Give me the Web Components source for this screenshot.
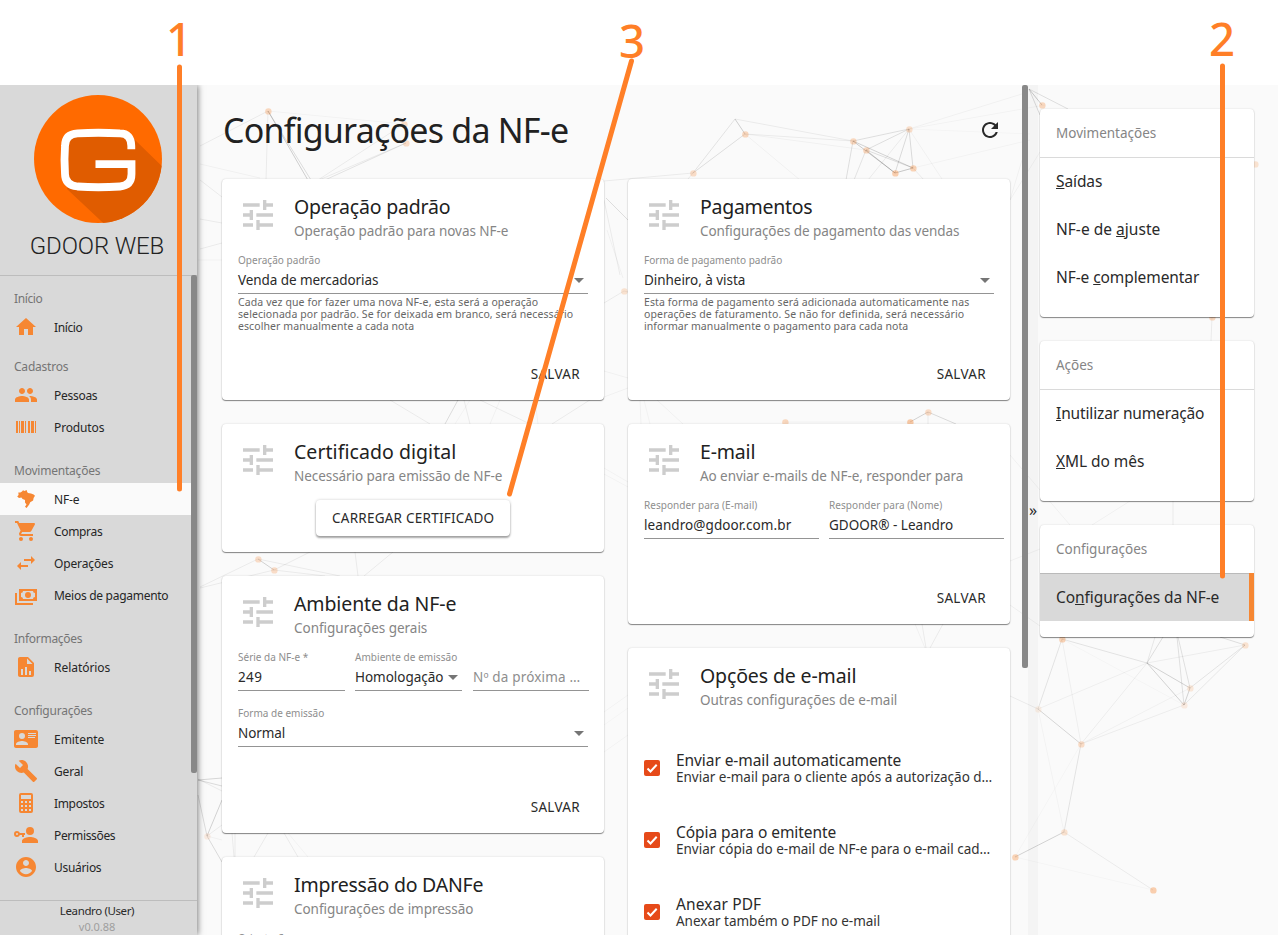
<!DOCTYPE html>
<html lang="pt-BR">
<head>
<meta charset="utf-8">
<title>GDOOR WEB</title>
<style>
html,body{margin:0;height:935px;overflow:hidden;background:#fff}
body{font-family:"Noto Sans","Open Sans",sans-serif;color:#2a2a2a}
</style>
</head>
<body>
<gdoor-page></gdoor-page>
<script>
const ICONS={
home:'M10,20V14H14V20H19V12H22L12,3L2,12H5V20H10Z',
people:'M16 11c1.66 0 2.99-1.34 2.99-3S17.66 5 16 5c-1.66 0-3 1.34-3 3s1.34 3 3 3zm-8 0c1.66 0 2.99-1.34 2.99-3S9.66 5 8 5C6.34 5 5 6.34 5 8s1.34 3 3 3zm0 2c-2.33 0-7 1.17-7 3.5V19h14v-2.5c0-2.33-4.67-3.5-7-3.5zm8 0c-.29 0-.62.02-.97.05 1.16.84 1.97 1.97 1.97 3.45V19h6v-2.5c0-2.33-4.67-3.5-7-3.5z',
barcode:'M2,6H4V18H2V6M5,6H6V18H5V6M7,6H10V18H7V6M11,6H12V18H11V6M14,6H16V18H14V6M17,6H20V18H17V6M21,6H22V18H21V6Z',
brazil:'M8 4.6L9 3.2L10.5 4L12.6 3.1L13.2 5L14 6L17 6.6L19.6 7.6L21 8.8L19.6 11L19.1 13.6L16.2 15.2L15.2 17.6L12.6 20.9L11 19.8L12.5 17.4L11 15.6L11 13L8.6 12L7.4 10.6L5 11L3.2 9.4L4.6 8L4.3 5.4L6.4 5.6Z',
cart:'M17,18C15.89,18 15,18.89 15,20A2,2 0 0,0 17,22A2,2 0 0,0 19,20C19,18.89 18.1,18 17,18M1,2V4H3L6.6,11.59L5.24,14.04C5.09,14.32 5,14.65 5,15A2,2 0 0,0 7,17H19V15H7.42A0.25,0.25 0 0,1 7.17,14.75C7.17,14.7 7.18,14.66 7.2,14.63L8.1,13H15.55C16.3,13 16.96,12.58 17.3,11.97L20.88,5.5C20.95,5.34 21,5.17 21,5A1,1 0 0,0 20,4H5.21L4.27,2M7,18C5.89,18 5,18.89 5,20A2,2 0 0,0 7,22A2,2 0 0,0 9,20C9,18.89 8.1,18 7,18Z',
swap:'M21,9L17,5V8H10V10H17V13M7,11L3,15L7,19V16H14V14H7V11Z',
cash:'M5,6H23V18H5V6M14,9A3,3 0 0,1 17,12A3,3 0 0,1 14,15A3,3 0 0,1 11,12A3,3 0 0,1 14,9M9,8A2,2 0 0,1 7,10V14A2,2 0 0,1 9,16H19A2,2 0 0,1 21,14V10A2,2 0 0,1 19,8H9M1,10H3V20H19V22H1V10Z',
report:'M13,9H18.5L13,3.5V9M6,2H14L20,8V20A2,2 0 0,1 18,22H6C4.89,22 4,21.1 4,20V4C4,2.89 4.89,2 6,2M7,20H9V14H7V20M11,20H13V12H11V20M15,20H17V16H15V20Z',
idcard:'M2,3H22C23.05,3 24,3.95 24,5V19C24,20.05 23.05,21 22,21H2C0.95,21 0,20.05 0,19V5C0,3.95 0.95,3 2,3M14,6V7H22V6H14M14,8V9H21.5L22,9V8H14M14,10V11H21V10H14M8,13.91C6,13.91 2,15 2,17V18H14V17C14,15 10,13.91 8,13.91M8,6A3,3 0 0,0 5,9A3,3 0 0,0 8,12A3,3 0 0,0 11,9A3,3 0 0,0 8,6Z',
wrench:'M22.7 19l-9.1-9.1c.9-2.3.4-5-1.5-6.9-2-2-5-2.4-7.4-1.3L9 6 6 9 1.6 4.7C.4 7.1.9 10.1 2.9 12.1c1.9 1.9 4.6 2.4 6.9 1.5l9.1 9.1c.4.4 1 .4 1.4 0l2.3-2.3c.5-.4.5-1.1.1-1.4z',
calc:'M7,2H17A2,2 0 0,1 19,4V20A2,2 0 0,1 17,22H7A2,2 0 0,1 5,20V4A2,2 0 0,1 7,2M7,4V8H17V4H7M7,10V12H9V10H7M11,10V12H13V10H11M15,10V12H17V10H15M7,14V16H9V14H7M11,14V16H13V14H11M15,14V16H17V14H15M7,18V20H9V18H7M11,18V20H13V18H11M15,18V20H17V18H15Z',
key:'M11,10V12H10V14H8V12H5.83C5.42,13.17 4.31,14 3,14A3,3 0 0,1 0,11A3,3 0 0,1 3,8C4.31,8 5.42,8.83 5.83,10H11M3,10A1,1 0 0,0 2,11A1,1 0 0,0 3,12A1,1 0 0,0 4,11A1,1 0 0,0 3,10M16,14C18.67,14 24,15.34 24,18V20H8V18C8,15.34 13.33,14 16,14M16,12A4,4 0 0,1 12,8A4,4 0 0,1 16,4A4,4 0 0,1 20,8A4,4 0 0,1 16,12Z',
user:'M12 2C6.48 2 2 6.48 2 12s4.48 10 10 10 10-4.48 10-10S17.52 2 12 2zm0 3c1.66 0 3 1.34 3 3s-1.34 3-3 3-3-1.34-3-3 1.34-3 3-3zm0 14.2c-2.5 0-4.71-1.28-6-3.22.03-1.99 4-3.08 6-3.08 1.99 0 5.97 1.09 6 3.08-1.29 1.94-3.5 3.22-6 3.22z',
tune:'M3 17v2h6v-2H3zM3 5v2h10V5H3zm10 16v-2h8v-2h-8v-2h-2v6h2zM7 9v2H3v2h4v2h2V9H7zm14 4v-2H11v2h10zm-6-4h2V7h4V5h-4V3h-2v6z',
refresh:'M17.65 6.35C16.2 4.9 14.21 4 12 4c-4.42 0-7.99 3.58-7.99 8s3.57 8 7.99 8c3.73 0 6.84-2.55 7.73-6h-2.08c-.82 2.33-3.04 4-5.65 4-3.31 0-6-2.69-6-6s2.69-6 6-6c1.66 0 3.14.69 4.22 1.78L13 11h7V4l-2.35 2.35z'
};

class Base extends HTMLElement{
  constructor(){super();this.attachShadow({mode:'open'})}
  a(n){return this.getAttribute(n)||''}
  connectedCallback(){this.shadowRoot.innerHTML=`<style>${this.css()}</style>${this.html()}`}
  css(){return ':host{display:block}'}
  html(){return '<slot></slot>'}
}

class UiIcon extends Base{
  css(){return ':host{display:block;flex:none;width:var(--s,24px);height:var(--s,24px)}svg{display:block;width:100%;height:100%;fill:currentColor}'}
  html(){return `<svg viewBox="0 0 24 24"><path fill-rule="evenodd" d="${ICONS[this.a('name')]}"/></svg>`}
}

class AppLogo extends Base{
  css(){return `:host{display:flex;flex-direction:column;align-items:center;height:191px;box-sizing:border-box;padding:10px 1px 0 0;border-bottom:1px solid #bdbdbd}
    svg{display:block;width:128px;height:128px}
    .n{font:300 24px/28px Roboto,sans-serif;margin-top:9px;color:#222;margin-right:2px}`}
  html(){return `<svg viewBox="0 0 128 128"><defs><clipPath id="c"><circle cx="64" cy="64" r="64"/></clipPath></defs>
    <circle cx="64" cy="64" r="64" fill="#ff6a00"/>
    <g clip-path="url(#c)"><path d="M34 41H93L100 44L140 83V140H82L33 94Z" fill="#e05c00"/></g>
    <path d="M97.3 54.3V51Q97.3 38.3 86 38.3Q64 37.2 43.500 38.300Q31 39 31 51Q30 64 31 79Q31 90 43.500 91.500Q64 93 86 91.500Q97.500 90.500 97.500 79V69.200H61.500" fill="none" stroke="#fff" stroke-width="7.8"/></svg>
    <div class="n"><fit-text w="134">GDOOR WEB</fit-text></div>`}
}

class NavGroup extends Base{
  css(){return `:host{display:block}
    .l{height:25px;line-height:26px;padding:var(--gap,15px) 0 0 14px;font-size:12px;color:#757575}`}
  html(){return `<div class="l"><fit-text w="${this.a('w')}">${this.a('label')}</fit-text></div><slot></slot>`}
}
class NavItem extends Base{
  css(){return `:host{display:flex;align-items:center;height:32px;padding-left:14px;font-size:12px;line-height:30px;color:#262626;margin-right:6px}
    :host([active]){background:#fafafa}
    ui-icon{color:#f68733;margin-right:16px}
    fit-text{margin-top:2px}`}
  html(){return `<ui-icon name="${this.a('icon')}"></ui-icon><fit-text w="${this.a('w')}"><slot></slot></fit-text>`}
}
class AppSidebar extends Base{
  css(){return `:host{display:flex;flex-direction:column;width:197px;background:#d9d9d9;box-shadow:1px 0 6px rgba(0,0,0,.5);z-index:2}
    .list{flex:1;min-height:0;position:relative;margin-top:-1px}
    .bar{position:absolute;right:0;top:0;width:6px;height:498px;background:#888;border-radius:2px}
    footer{height:35px;border-top:1px solid #bdbdbd;font-size:11.500px;line-height:16px;text-align:center;padding-top:2px;box-sizing:border-box;padding-right:3px}
    .v{color:#9e9e9e;font-size:11px;line-height:15px}`}
  html(){return `<app-logo></app-logo><div class="list"><div class="bar"></div>
    <nav-group label="Início" w="28" style="--gap:11px"><nav-item icon="home" w="28">Início</nav-item></nav-group>
    <nav-group label="Cadastros" w="54" style="--gap:11px"><nav-item icon="people" w="43">Pessoas</nav-item><nav-item icon="barcode" w="50">Produtos</nav-item></nav-group>
    <nav-group label="Movimentações" w="86"><nav-item icon="brazil" w="25" active>NF-e</nav-item><nav-item icon="cart" w="48">Compras</nav-item><nav-item icon="swap" w="59">Operações</nav-item><nav-item icon="cash" w="114">Meios de pagamento</nav-item></nav-group>
    <nav-group label="Informações" w="68"><nav-item icon="report" w="56">Relatórios</nav-item></nav-group>
    <nav-group label="Configurações" w="78"><nav-item icon="idcard" w="50">Emitente</nav-item><nav-item icon="wrench" w="29">Geral</nav-item><nav-item icon="calc" w="50">Impostos</nav-item><nav-item icon="key" w="61">Permissões</nav-item><nav-item icon="user" w="47">Usuários</nav-item></nav-group>
    </div><footer><fit-text w="74">Leandro (User)</fit-text><div class="v"><fit-text w="36">v0.0.88</fit-text></div></footer>`}
}

class UiCard extends Base{
  css(){return `:host{display:flex;flex-direction:column;box-sizing:border-box;height:var(--h);padding:16px;background:#fff;border-radius:4px;box-shadow:0 1px 1px rgba(0,0,0,.45),0 0 2px rgba(0,0,0,.16)}
    header{display:flex;height:40px;margin-bottom:18px}
    ui-icon{--s:40px;color:#cdcdcd;margin-right:16px}
    .t{font-size:19.500px;line-height:24px;height:24px;white-space:nowrap;color:#212121}
    .s{font-size:13.500px;line-height:24px;color:#858585;white-space:nowrap}`}
  html(){return `<header><ui-icon name="tune"></ui-icon><div><div class="t"><fit-text w="${this.a('tw')}">${this.a('title-text')}</fit-text></div><div class="s"><fit-text w="${this.a('sw')}">${this.a('sub')}</fit-text></div></div></header><slot></slot>`}
}
class UiField extends Base{
  css(){return `:host{display:block;flex:none;box-sizing:border-box;width:var(--w,350px)}
    .l{height:14px;line-height:14px;font-size:10px;color:#8e8e8e;white-space:nowrap}
    .v{display:flex;align-items:center;justify-content:space-between;height:27px;box-sizing:border-box;border-bottom:1px solid #949494;font-size:13.500px;line-height:24px;white-space:nowrap}
    .v fit-text{margin-top:-1px}
    :host([empty]) .v{color:#8e8e8e}
    i{width:0;height:0;border:5px solid transparent;border-top-color:#757575;border-bottom:0;margin-right:4px}
    .h{font-size:10.500px;line-height:12px;color:#666;padding-top:2px;white-space:nowrap}`}
  html(){return `<div class="l">${this.a('label')?`<fit-text w="${this.a('lw')}">${this.a('label')}</fit-text>`:''}</div>
    <div class="v"><fit-text w="${this.a('vw')}">${this.a('value')}</fit-text>${this.hasAttribute('select')?'<i></i>':''}</div><div class="h"><slot></slot></div>`}
}
class UiAction extends Base{
  css(){return `:host{display:block;margin-top:auto;align-self:flex-end;font-size:13.500px;line-height:20px;padding-right:8px}`}
  html(){return '<fit-text w="49">SALVAR</fit-text>'}
}
class RaisedButton extends Base{
  css(){return `:host{display:block;align-self:center;box-sizing:border-box;width:194px;height:36px;margin-top:2px;padding-left:16px;border-radius:4px;font-size:13.500px;line-height:36px;background:#fff;box-shadow:0 2px 2px rgba(0,0,0,.32),0 0 3px rgba(0,0,0,.2)}`}
  html(){return '<fit-text w="162"><slot></slot></fit-text>'}
}
class CheckRow extends Base{
  css(){return `:host{display:flex;align-items:center;height:72px}
    .b{width:16px;height:16px;border-radius:2px;background:#e64a19;margin-right:16px;flex:none}
    svg{display:block}
    .p{font-size:15.500px;line-height:18px;white-space:nowrap}.q{font-size:13.500px;line-height:16px;white-space:nowrap;color:#333}`}
  html(){return `<div class="b"><svg width="16" height="16"><path d="M3.500 8.500L6.500 11.500L12.700 4.800" fill="none" stroke="#fff" stroke-width="2"/></svg></div>
    <div><div class="p"><fit-text w="${this.a('pw')}">${this.a('primary')}</fit-text></div><div class="q"><fit-text w="${this.a('qw')}">${this.a('secondary')}</fit-text></div></div>`}
}

class SidePanel extends Base{
  css(){return `:host{display:block;background:#fff;border-radius:4px;padding-bottom:16px;box-shadow:0 1px 1px rgba(0,0,0,.45),0 0 2px rgba(0,0,0,.14)}
    .h{height:48px;line-height:48px;padding-left:16px;font-size:13.500px;color:#858585;box-shadow:0 1px #dadada;position:relative}`}
  html(){return `<div class="h"><fit-text w="${this.a('w')}">${this.a('label')}</fit-text></div><slot></slot>`}
}
class SideLink extends Base{
  css(){return `:host{display:block;height:48px;line-height:48px;padding-left:16px;font-size:15.500px}
    :host([active]){background:#d9d9d9;border-right:5px solid #f68733;box-shadow:inset 0 1px #bababa;position:relative}`}
  html(){return `<fit-text w="${this.a('w')}"><slot></slot></fit-text>`}
}

/* decorative constellation behind the content */
class NetBackdrop extends Base{
  css(){return ':host{position:absolute;inset:0;display:block}svg{display:block}'}
  html(){
    const L=[[268,111,309,182,.22],[268,111,311,180,.15],[268,111,266,180],[268,111,200,146],[268,111,404,124,.04],[404,124,318,180],[406,143,325,180,.12],[406,143,319,180],[200,164,260,178,.05],[200,180,222,197],[200,219,222,223],[200,249,222,243],[198,260,222,260,.04],
    [735,119,745,134,.22],[735,119,693,173,.12],[745,134,693,173,.14],[735,119,853,141],[745,134,853,141],[745,134,866,150,.05],[745,134,800,180,.05],[853,141,909,129,.14],[853,141,895,173,.24],[853,141,913,168,.2],[866,150,909,129,.14],[866,150,913,168,.14],[866,150,895,173,.2],[895,173,913,168,.26],[909,129,913,168,.16],[909,129,895,173,.16],[909,129,868,180],[853,141,846,180,.14],[866,150,854,180,.12],[909,129,942,179,.05],[909,129,1025,93,.05],[909,129,1045,105,.04],[909,129,1030,134,.03],[913,168,1030,140,.04],[693,173,604,181],[693,173,688,179],[913,168,924,180],[624,291,604,303],[624,291,628,292],[606,198,628,220,.14],[607,230,623,278,.05],[604,200,620,275],[1022,160,1010,200,.05],
    [1029,89,1042,105,.25],[1029,89,1068,109,.14],[1029,89,1040,115,.16],[1040,152,1010,200,.05],[1212,317,1211,341],[458,400,445,424,.15],[464,400,470,424],[480,400,530,424],[390,400,430,424],[500,400,490,424,.05],[470,400,455,424,.04],[535,400,538,424,.05],[604,391,552,424],[604,371,628,378,.05],[258,559,274,570,.2],[258,559,200,587],[274,570,310,552],[274,570,200,588],[258,559,340,576],[274,570,325,576],[355,552,358,576],[393,552,364,576],[604,468,628,482,.04],[604,474,628,487,.04],
    [910,422,928,412,.2],[928,412,956,424,.16],[928,412,928,424],[785,422,910,422,.04],[640,400,641,424,.05],[644,400,650,424,.04],[657,400,683,424,.05],[628,388,604,397,.05],[1010,455,1070,525,.05],[915,624,925,648,.05],[922,624,926,648],[943,624,930,648],[1130,501,1092,525,.05],[1173,501,1173,525],[1010,561,1040,549,.05],[1010,605,1040,626,.06],
    [198,780,222,778,.18],[198,780,222,786,.16],[198,779,222,791],[198,795,207,836,.15],[207,836,222,800,.2],[207,836,222,862,.16],[207,836,222,825],[207,836,222,840,.05],[232,833,234,857],[235,833,235,857],[268,833,254,857],[284,833,298,857],[288,833,308,857,.04],[604,712,628,695,.04],[604,725,628,708,.03],[604,752,628,735,.04],
    [1062,639,1147,663,.12],[1062,639,1038,709,.12],[1062,639,1081,744,.06],[1062,639,1184,705,.03],[1147,663,1038,709,.06],[1147,663,1081,744,.07],[1147,663,1190,688,.2],[1147,663,1184,705,.2],[1147,663,1245,645,.07],[1147,663,1155,637,.1],[1147,663,1163,637,.14],[1190,688,1184,705,.2],[1190,688,1245,645,.12],[1190,688,1178,637,.13],[1184,705,1245,645,.1],[1184,705,1177,637,.13],[1184,705,1081,744,.07],[1190,688,1081,744,.05],[1038,709,1081,744,.18],[1038,709,1064,832,.04],[1081,744,1064,832,.12],[1081,744,1015,857,.03],[1064,832,1015,857,.2],[1064,832,1153,890,.08],[1015,857,1153,890,.03],[1038,709,1010,696],[1245,645,1220,637,.14]];
    const N=[[268,111,.35],[404,124,.3],[406,143,.3],[745,134,.35],[693,173,.3],[853,141,.35],[866,150,.35],[909,129,.28],[913,168,.4],[895,173,.45],[624,291,.25],[1042,105,.35],[1255,164,.25],[1212,317,.35],[258,559,.3],[274,570,.3],[785,422,.35],[910,422,.5],[928,412,.3],[207,836,.15],[1062,639,.4],[1190,688,.2],[1184,705,.15],[1245,645,.25],[1038,709,.12],[1081,744,.3],[1064,832,.25],[1015,857,.4],[1153,890,.45]];
    return `<svg width="1278" height="850" viewBox="0 85 1278 850">${L.map(l=>`<path d="M${l[0]} ${l[1]}L${l[2]} ${l[3]}" stroke="#000" stroke-opacity="${((l[4]||.08)*.8).toFixed(3)}"/>`).join('')}${N.map(n=>`<circle cx="${n[0]+.4}" cy="${n[1]+.4}" r="3.200" fill="#f68733" fill-opacity="${(n[2]*.85).toFixed(3)}"/>`).join('')}</svg>`}
}

class CalloutLayer extends Base{
  css(){return `:host{position:absolute;inset:0;z-index:5}svg{position:absolute;left:0;top:0}
   b{position:absolute;font-weight:500;font-size:45.500px;line-height:48px;color:#ff7f27;width:40px;text-align:center}`}
  html(){return `<svg width="1278" height="935" fill="none" stroke="#ff7f27" stroke-width="5" stroke-linecap="round"><path d="M179.500 67V489M1222.500 66V576M631.500 61L509.500 494"/></svg>
   <b style="left:159px;top:14px">1</b><b style="left:1202px;top:14px">2</b><b style="left:612px;top:16px">3</b>`}
}

class GdoorPage extends Base{
  css(){return `:host{display:block;position:relative;height:935px;padding-top:85px;box-sizing:border-box}
    .app{display:flex;height:850px;background:#fafafa;position:relative;overflow:hidden}
    main{width:825px;box-sizing:border-box;padding:24px 12px 0 25px;position:relative;overflow:hidden}
    .head{display:flex;justify-content:space-between;align-items:center;height:42px;margin-bottom:28px;padding:0 8px 0 1px}
    h1{margin:0;font-weight:400;font-size:34px;line-height:42px;white-space:nowrap;color:#212121}
    .cols{display:grid;grid-template-columns:382px 382px;gap:24px}
    .col{display:flex;flex-direction:column;gap:24px}
    .row{display:flex;gap:10px}
    .track{width:6px;position:relative}.track i{display:block;height:583px;background:#888;border-radius:2px}
    .toggle{width:10px;background:rgba(0,0,0,.022);position:relative;display:flex;align-items:center;justify-content:center;font-size:16px}
    aside{width:214px;padding:24px 24px 0 2px;display:flex;flex-direction:column;gap:24px;position:relative}`}
  html(){return `<div class="app"><net-backdrop></net-backdrop><app-sidebar></app-sidebar>
  <main><div class="head"><h1><fit-text w="345">Configurações da NF-e</fit-text></h1><ui-icon name="refresh"></ui-icon></div>
  <div class="cols"><div class="col">
    <ui-card style="--h:221px" title-text="Operação padrão" tw="156" sub="Operação padrão para novas NF-e" sw="214">
      <ui-field label="Operação padrão" lw="82" value="Venda de mercadorias" vw="140" select><fit-text w="300">Cada vez que for fazer uma nova NF-e, esta será a operação</fit-text><br><fit-text w="335">selecionada por padrão. Se for deixada em branco, será necessário</fit-text><br><fit-text w="176">escolher manualmente a cada nota</fit-text></ui-field>
      <ui-action></ui-action></ui-card>
    <ui-card style="--h:128px" title-text="Certificado digital" tw="162" sub="Necessário para emissão de NF-e" sw="208"><raised-button>CARREGAR CERTIFICADO</raised-button></ui-card>
    <ui-card style="--h:257px" title-text="Ambiente da NF-e" tw="162" sub="Configurações gerais" sw="133">
      <div class="row"><ui-field style="--w:107px" label="Série da NF-e *" lw="70" value="249" vw="24"></ui-field><ui-field style="--w:107px" label="Ambiente de emissão" lw="102" value="Homologação" vw="88" select></ui-field><ui-field style="--w:116px;margin-left:1px" value="Nº da próxima …" vw="107" empty></ui-field></div>
      <ui-field style="margin-top:13px" label="Forma de emissão" lw="86" value="Normal" vw="47" select></ui-field>
      <ui-action></ui-action></ui-card>
    <ui-card style="--h:221px" title-text="Impressão do DANFe" tw="189" sub="Configurações de impressão" sw="179"><ui-field label="Orientação" lw="52" select></ui-field></ui-card>
  </div><div class="col">
    <ui-card style="--h:221px" title-text="Pagamentos" tw="112" sub="Configurações de pagamento das vendas" sw="259">
      <ui-field label="Forma de pagamento padrão" lw="138" value="Dinheiro, à vista" vw="101" select><fit-text w="325">Esta forma de pagamento será adicionada automaticamente nas</fit-text><br><fit-text w="320">operações de faturamento. Se não for definida, será necessário</fit-text><br><fit-text w="264">informar manualmente o pagamento para cada nota</fit-text></ui-field>
      <ui-action></ui-action></ui-card>
    <ui-card style="--h:200px" title-text="E-mail" tw="55" sub="Ao enviar e-mails de NF-e, responder para" sw="263">
      <div class="row" style="margin-right:-10px"><ui-field style="--w:175px" label="Responder para (E-mail)" lw="113" value="leandro@gdoor.com.br" vw="147"></ui-field><ui-field style="--w:175px" label="Responder para (Nome)" lw="113" value="GDOOR® - Leandro" vw="124"></ui-field></div>
      <ui-action></ui-action></ui-card>
    <ui-card style="--h:345px" title-text="Opções de e-mail" tw="156" sub="Outras configurações de e-mail" sw="197">
      <div style="padding-top:10px"><check-row primary="Enviar e-mail automaticamente" pw="225" secondary="Enviar e-mail para o cliente após a autorização d…" qw="316"></check-row><check-row primary="Cópia para o emitente" pw="160" secondary="Enviar cópia do e-mail de NF-e para o e-mail cad…" qw="314"></check-row><check-row primary="Anexar PDF" pw="85" secondary="Anexar também o PDF no e-mail" qw="204"></check-row></div></ui-card>
  </div></div></main>
  <div class="track"><i></i></div><div class="toggle">»</div>
  <aside>
    <side-panel label="Movimentações" w="100"><side-link w="46"><u>S</u>aídas</side-link><side-link w="104">NF-e de <u>a</u>juste</side-link><side-link w="143">NF-e <u>c</u>omplementar</side-link></side-panel>
    <side-panel label="Ações" w="37"><side-link w="148"><u>I</u>nutilizar numeração</side-link><side-link w="88"><u>X</u>ML do mês</side-link></side-panel>
    <side-panel label="Configurações" w="91"><side-link active w="163">Co<u>n</u>figurações da NF-e</side-link></side-panel>
  </aside></div><callout-layer></callout-layer>`}
}

/* text run whose tracking is tuned so that it spans the width given in "w" */
class FitText extends Base{
  css(){return ':host{display:inline-block;white-space:nowrap;vertical-align:top}'}
  connectedCallback(){
    super.connectedCallback();
    const w=+this.a('w');if(!w)return;
    const s=this.querySelector('slot');
    const txt=s?s.assignedNodes({flatten:true}).map(n=>n.textContent).join(''):this.textContent;
    this.style.letterSpacing='0px';
    const cur=this.getBoundingClientRect().width,n=txt.trim().length;
    if(n)this.style.letterSpacing=((w+.3-cur)/n).toFixed(3)+'px';
  }
}

[['gdoor-page',GdoorPage],['net-backdrop',NetBackdrop],['app-sidebar',AppSidebar],['app-logo',AppLogo],['nav-group',NavGroup],['nav-item',NavItem],['ui-card',UiCard],['ui-field',UiField],['ui-action',UiAction],['raised-button',RaisedButton],['check-row',CheckRow],['side-panel',SidePanel],['side-link',SideLink],['callout-layer',CalloutLayer],['ui-icon',UiIcon],['fit-text',FitText]].forEach(([n,c])=>customElements.define(n,c));
</script>
</body>
</html>
